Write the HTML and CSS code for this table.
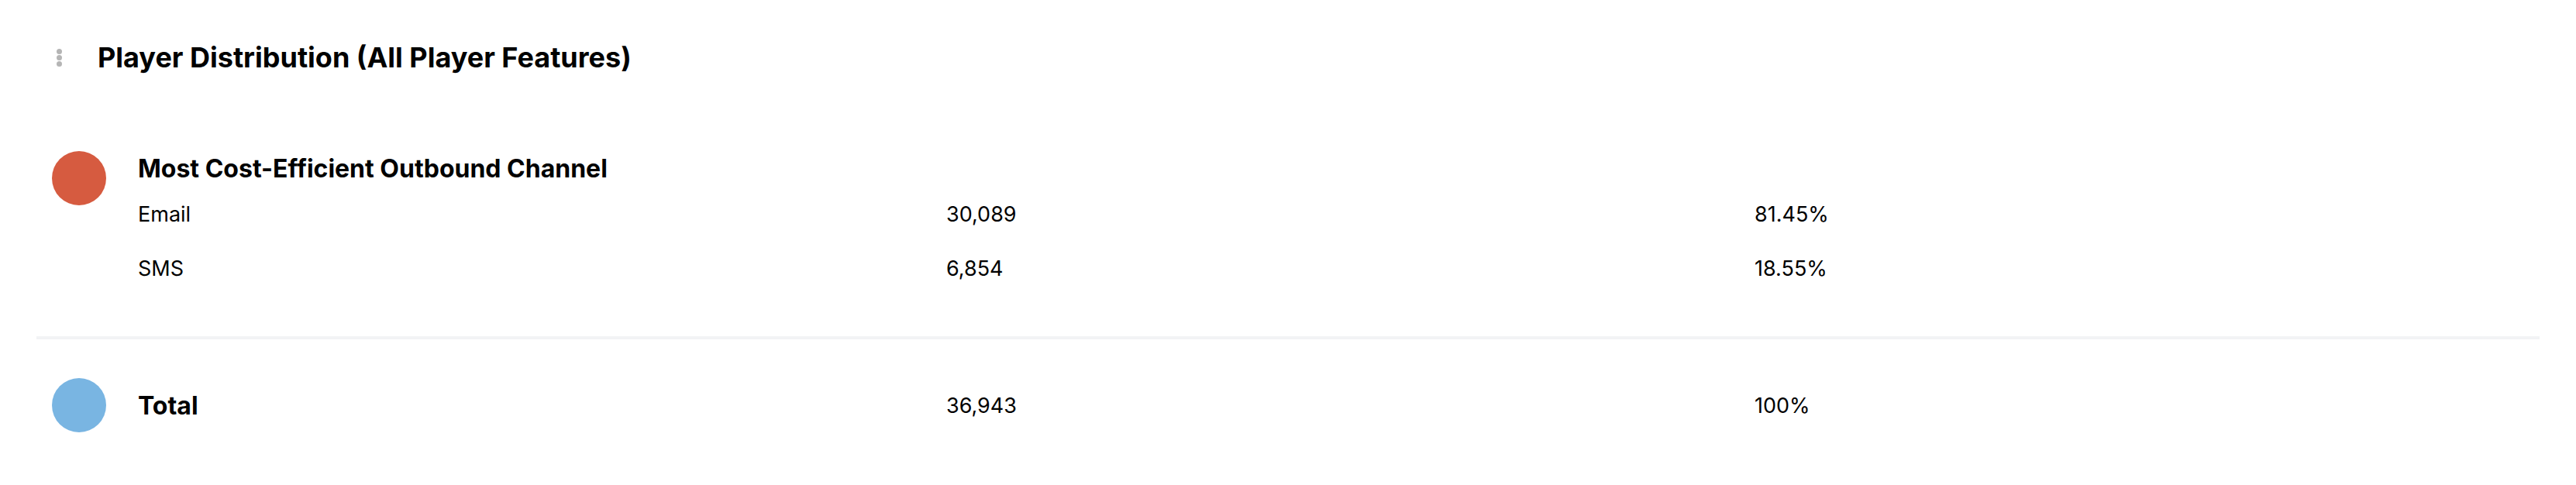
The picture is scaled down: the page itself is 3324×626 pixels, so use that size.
FILE: index.html
```html
<!DOCTYPE html>
<html lang="en">
<head>
  <meta charset="UTF-8">
  <title>Player Distribution</title>
  <meta name="viewport" content="width=device-width, initial-scale=1.0"/>
  <link rel="stylesheet" href="styles.css">
</head>
<body>

<!-- DISTRIBUTION CARD -->
<div class="card">
  <div class="card-header">
    <span class="drag-handle">
      <i></i><i></i><i></i>
    </span>
    <h2>Player Distribution (All Player Features)</h2>
  </div>

  <div class="group">
    <span class="swatch swatch-red"></span>
    <div class="group-body">
      <div class="group-title">Most Cost-Efficient Outbound Channel</div>
      <div class="data-row">
        <span>Email</span>
        <span>30,089</span>
        <span>81.45%</span>
      </div>
      <div class="data-row">
        <span>SMS</span>
        <span>6,854</span>
        <span>18.55%</span>
      </div>
    </div>
  </div>

  <div class="divider"></div>

  <!-- TOTAL -->
  <div class="group total">
    <span class="swatch swatch-blue"></span>
    <div class="group-body">
      <div class="data-row">
        <strong>Total</strong>
        <span>36,943</span>
        <span>100%</span>
      </div>
    </div>
  </div>
</div>

</body>
</html>
```

FILE: styles.css
```css
body {
  font-family: Inter, "Noto Sans", sans-serif;
  background: #fff;
  margin: 0;
  padding: 0 47px;
  color: #000;
}

.card {
  background: white;
}

.card-header {
  display: flex;
  align-items: center;
  gap: 46px;
  height: 48px;
  margin-top: 50px;
  padding-left: 26px;
}

.drag-handle {
  display: flex;
  flex-direction: column;
  gap: 1px;
}

.drag-handle i {
  display: block;
  width: 7px;
  height: 7px;
  border-radius: 50%;
  background: #b5b5b5;
}

h2 {
  margin: 0;
  font-size: 36px;
  font-weight: 700;
}

.group {
  display: flex;
  align-items: flex-start;
  gap: 41px;
  padding-left: 20px;
  margin-top: 97px;
}

.swatch {
  flex: none;
  width: 70px;
  height: 70px;
  border-radius: 50%;
}

.swatch-red {
  background: #d65b40;
}

.swatch-blue {
  background: #79b5e2;
}

.group-body {
  flex: 1;
}

.group-title {
  font-size: 32px;
  font-weight: 700;
  line-height: 46px;
}

.data-row {
  display: grid;
  grid-template-columns: 1043px 1043px 1fr;
  align-items: center;
  height: 70px;
  font-size: 27px;
}

.data-row strong {
  font-size: 32px;
  font-weight: 700;
}

.divider {
  height: 4px;
  background: #f2f3f5;
  margin-top: 53px;
}

.total {
  margin-top: 50px;
}
```
